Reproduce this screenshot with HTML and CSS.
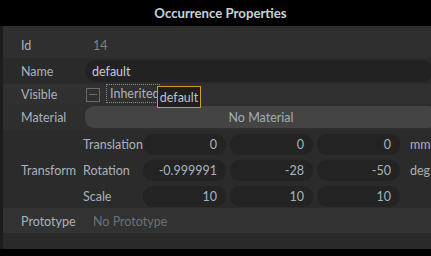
FILE: index.html
```html
<!DOCTYPE html>
<html>
<head>
<meta charset="utf-8">
<link rel="stylesheet" href="styles.css">
</head>
<body>
<div class="panel">
  <div class="header">Occurrence Properties</div>
  <div class="body">
    <div class="row row-id">
      <div class="label">Id</div>
      <div class="value dim">14</div>
    </div>
    <div class="row row-name">
      <div class="label">Name</div>
      <div class="field text-field">default</div>
    </div>
    <div class="row row-visible">
      <div class="label">Visible</div>
      <div class="checkbox"><span class="dash"></span></div>
      <div class="focus">Inherited</div>
      <div class="tooltip">default</div>
    </div>
    <div class="row row-material">
      <div class="label">Material</div>
      <div class="button">No Material</div>
    </div>
    <div class="row row-transform">
      <div class="label">Transform</div>
      <div class="tgrid">
        <div class="sublabel">Translation</div>
        <div class="num">0</div>
        <div class="num">0</div>
        <div class="num">0</div>
        <div class="unit">mm</div>
        <div class="sublabel">Rotation</div>
        <div class="num">-0.999991</div>
        <div class="num">-28</div>
        <div class="num">-50</div>
        <div class="unit">deg</div>
        <div class="sublabel">Scale</div>
        <div class="num">10</div>
        <div class="num">10</div>
        <div class="num">10</div>
        <div class="unit"></div>
      </div>
    </div>
    <div class="row row-proto">
      <div class="label">Prototype</div>
      <div class="value faint">No Prototype</div>
    </div>
    <div class="filler"></div>
  </div>
</div>
</body>
</html>
```

FILE: styles.css
```css
* { box-sizing: border-box; }
html, body {
  margin: 0;
  padding: 0;
  background: #000;
  width: 431px;
  height: 256px;
  overflow: hidden;
}
.panel {
  width: 431px;
  font-family: Lato, "Liberation Sans", sans-serif;
  font-size: 12.5px;
  color: #a8b2bc;
}
.header {
  height: 26px;
  background: #000;
  color: #c9d1d9;
  font-weight: bold;
  font-size: 13.2px;
  display: flex;
  align-items: center;
  justify-content: center;
  padding-left: 10px;
}
.body {
  border-left: 3px solid #1c1c1c;
  overflow: hidden;
}
.row {
  display: flex;
  align-items: center;
  padding-left: 18px;
  position: relative;
}
.label {
  width: 64px;
  flex: none;
}
.row-id { height: 32px; background: #2f2f2f; padding-top: 6px; }
.row-name { height: 26px; background: #2a2a2a; }
.row-visible { height: 20px; background: #303030; }
.row-material { height: 26px; background: #2e2e2e; }
.row-transform { height: 78px; background: #2b2b2b; padding-top: 2px; }
.row-proto { height: 25px; background: #323232; padding-top: 1px; }
.filler { height: 16px; background: #2a2a2a; }

.value { padding-left: 8px; }
.dim { color: #7b828a; }
.faint { color: #6b7279; }

.field {
  height: 22px;
  background: #222;
  border-radius: 11px;
}
.text-field {
  flex: none;
  width: 348px;
  padding-left: 7px;
  display: flex;
  align-items: center;
  color: #c6cdd4;
}

.checkbox {
  width: 14px;
  height: 14px;
  border: 1px solid #6a6a6a;
  margin-left: 1px;
  margin-top: 1px;
  display: flex;
  align-items: center;
  justify-content: center;
  flex: none;
}
.dash {
  width: 8px;
  height: 1px;
  background: #6a6a6a;
}
.focus {
  margin-left: 6px;
  height: 19px;
  padding: 0 3px 0 3px;
  border: 1px dotted #8a8a8a;
  display: flex;
  align-items: center;
  width: 54px;
  margin-top: -2px;
}
.tooltip {
  position: absolute;
  left: 154px;
  top: 2px;
  width: 44px;
  height: 22px;
  background: #1f1f1f;
  border: 1px solid #d49a1c;
  color: #b9c3cd;
  display: flex;
  align-items: center;
  justify-content: center;
  z-index: 2;
}

.button {
  flex: none;
  width: 352px;
  height: 22px;
  background: #444;
  border-radius: 9px;
  display: flex;
  align-items: center;
  justify-content: center;
  color: #a3acb5;
}

.row-transform .label { width: 62px; }
.tgrid {
  display: grid;
  grid-template-columns: 56px 83px 83px 83px auto;
  grid-auto-rows: 26px;
  column-gap: 4px;
  align-items: center;
}
.num {
  height: 21px;
  background: #232323;
  border-radius: 10px;
  display: flex;
  align-items: center;
  justify-content: flex-end;
  padding-right: 9px;
  color: #a9b3bd;
}
.unit { padding-left: 6px; color: #a8b2bc; white-space: nowrap; }
```
